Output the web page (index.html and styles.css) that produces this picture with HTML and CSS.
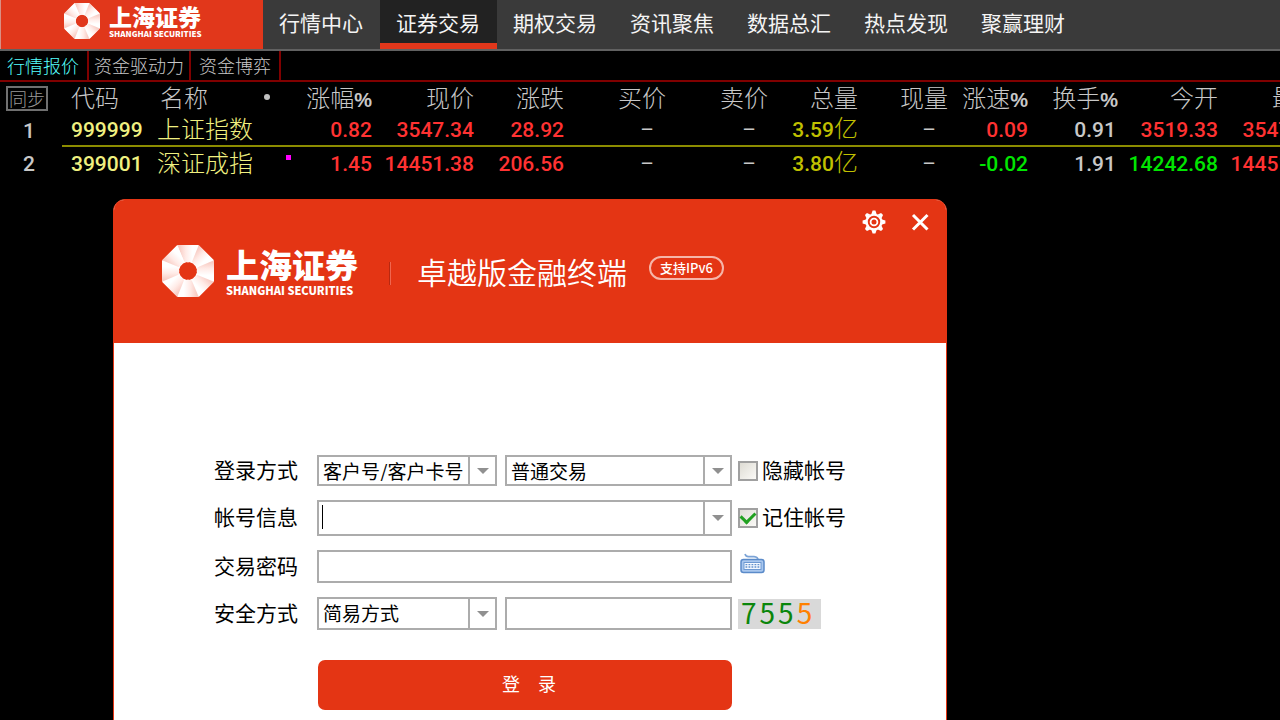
FILE: index.html
```html
<!DOCTYPE html>
<html lang="zh-CN">
<head>
<meta charset="utf-8">
<title>上海证券 卓越版金融终端</title>
<link rel="stylesheet" href="styles.css">
</head>
<body>
<svg class="defs" width="0" height="0" aria-hidden="true">
  <defs>
    <linearGradient id="facet" x1="0" y1="0" x2="1" y2="0">
      <stop offset="0.1" stop-color="#f8ccc4"/>
      <stop offset="0.4" stop-color="#ffebe7"/>
      <stop offset="0.7" stop-color="#ffffff"/>
    </linearGradient>
    <symbol id="mark" viewBox="-26 -26 52 52">
      <path d="M-10.4-25.500H10.4L25.500-10.4V10.4L10.4 25.500H-10.4L-25.500 10.4V-10.4ZM0-9.500L-6.700-6.700L-9.500 0L-6.700 6.700L0 9.500L6.700 6.700L9.500 0L6.700-6.700Z" fill="#fff" fill-rule="evenodd"/>
      <path id="wedge" d="M-10.8-26H10.8L3.8-9.600L0-8.600L-3.8-9.600Z" fill="url(#facet)"/>
      <use href="#wedge" transform="rotate(45)"/>
      <use href="#wedge" transform="rotate(90)"/>
      <use href="#wedge" transform="rotate(135)"/>
      <use href="#wedge" transform="rotate(180)"/>
      <use href="#wedge" transform="rotate(225)"/>
      <use href="#wedge" transform="rotate(270)"/>
      <use href="#wedge" transform="rotate(315)"/>
    </symbol>
  </defs>
</svg>
<div class="desktop">
  <header class="topbar">
    <div class="brand">
      <svg class="brand-mark" aria-hidden="true"><use href="#mark"/></svg>
      <div class="brand-name"><span class="brand-cn">上海证券</span><span class="brand-en">SHANGHAI SECURITIES</span></div>
    </div>
    <nav class="menu">
      <a href="#">行情中心</a>
      <a href="#" class="active">证券交易</a>
      <a href="#">期权交易</a>
      <a href="#">资讯聚焦</a>
      <a href="#">数据总汇</a>
      <a href="#">热点发现</a>
      <a href="#">聚赢理财</a>
    </nav>
  </header>
  <nav class="subtabs">
    <a href="#" class="current">行情报价</a>
    <a href="#" class="wide">资金驱动力</a>
    <a href="#">资金博弈</a>
  </nav>
  <main class="market">
    <table class="quotes">
      <colgroup>
        <col class="c-sync"><col class="c-code"><col class="c-name"><col class="c-rate"><col class="c-102"><col class="c-90"><col class="c-102"><col class="c-102"><col class="c-90"><col class="c-90"><col class="c-80"><col class="c-90"><col class="c-100"><col class="c-102">
      </colgroup>
      <thead>
        <tr>
          <th class="sync"><button type="button">同步</button></th>
          <th class="code">代码</th>
          <th class="name"><div class="name-head"><span>名称</span><i class="dot"></i></div></th>
          <th>涨幅<b>%</b></th><th>现价</th><th>涨跌</th><th>买价</th><th>卖价</th><th>总量</th><th>现量</th><th>涨速<b>%</b></th><th>换手<b>%</b></th><th>今开</th><th>最高</th>
        </tr>
      </thead>
      <tbody>
        <tr class="selected">
          <td class="index">1</td><td class="code">999999</td><td class="name">上证指数</td>
          <td class="up">0.82</td><td class="up">3547.34</td><td class="up">28.92</td><td class="none">–</td><td class="none">–</td><td class="volume">3.59<span>亿</span></td><td class="none">–</td><td class="up">0.09</td><td class="turn">0.91</td><td class="up">3519.33</td><td class="up">3547.34</td>
        </tr>
        <tr>
          <td class="index">2</td><td class="code">399001</td><td class="name"><div class="name-cell"><span>深证成指</span><i class="flag"></i></div></td>
          <td class="up">1.45</td><td class="up">14451.38</td><td class="up">206.56</td><td class="none">–</td><td class="none">–</td><td class="volume">3.80<span>亿</span></td><td class="none">–</td><td class="down">-0.02</td><td class="turn">1.91</td><td class="down">14242.68</td><td class="up">14451.38</td>
        </tr>
      </tbody>
    </table>
  </main>

  <section class="login">
    <header class="login-head">
      <div class="tools">
        <button type="button" aria-label="设置">
          <svg width="24" height="24" viewBox="-12 -12 24 24" fill="none" stroke="#fff">
            <circle r="7.400" stroke-width="2.400"/>
            <circle r="3.400" stroke-width="1.800"/>
            <g fill="#fff" stroke="none">
              <path id="tooth" d="M-2.6-8H2.6L1.4-11.400H-1.4Z"/>
              <use href="#tooth" transform="rotate(45)"/><use href="#tooth" transform="rotate(90)"/><use href="#tooth" transform="rotate(135)"/><use href="#tooth" transform="rotate(180)"/><use href="#tooth" transform="rotate(225)"/><use href="#tooth" transform="rotate(270)"/><use href="#tooth" transform="rotate(315)"/>
            </g>
          </svg>
        </button>
        <button type="button" aria-label="关闭">
          <svg width="24" height="24" viewBox="0 0 24 24" stroke="#fff" stroke-width="3"><path d="M5 5L19.500 19.500M19.500 5L5 19.500"/></svg>
        </button>
      </div>
      <div class="title-row">
        <svg class="login-mark" aria-hidden="true"><use href="#mark"/></svg>
        <div class="brand-name large"><span class="brand-cn">上海证券</span><span class="brand-en">SHANGHAI SECURITIES</span></div>
        <i class="rule"></i>
        <h1>卓越版金融终端</h1>
        <span class="badge">支持IPv6</span>
      </div>
    </header>
    <form class="login-form">
      <div class="row">
        <label class="caption" for="mode">登录方式</label>
        <div class="fields">
          <div class="combo short"><select id="mode"><option>客户号/客户卡号</option></select><span class="arrow"></span></div>
          <div class="combo"><select id="kind" aria-label="交易类型"><option>普通交易</option></select><span class="arrow"></span></div>
        </div>
        <label class="check"><input type="checkbox"><span>隐藏帐号</span></label>
      </div>
      <div class="row tall">
        <label class="caption" for="account">帐号信息</label>
        <div class="fields">
          <div class="combo"><input id="account" type="text"><i class="caret"></i><button class="arrow" type="button" aria-label="展开帐号"></button></div>
        </div>
        <label class="check"><input type="checkbox" checked><span>记住帐号</span></label>
      </div>
      <div class="row medium">
        <label class="caption" for="password">交易密码</label>
        <div class="fields"><div class="combo"><input id="password" type="password"></div></div>
        <button class="keyboard" type="button" aria-label="软键盘">
          <svg width="28" height="24" viewBox="0 0 28 24">
            <path d="M7 2Q8 5 11 4.600H16Q20 5 20 8" fill="none" stroke="#7ba3d6" stroke-width="1.600"/>
            <rect x="3" y="7.500" width="23" height="13" rx="2.500" fill="#a9c7ee" stroke="#5b8bc9" stroke-width="1.500"/>
            <rect x="6" y="10.500" width="17" height="7" fill="#f3f8ff" stroke="#6d99d2"/>
            <path d="M7.500 12.700H22M7.500 15H22" stroke="#6290cc" stroke-width="1.300" stroke-dasharray="1.800 1.200"/>
          </svg>
        </button>
      </div>
      <div class="row medium">
        <label class="caption" for="safe">安全方式</label>
        <div class="fields">
          <div class="combo short"><select id="safe"><option>简易方式</option></select><span class="arrow"></span></div>
          <div class="combo"><input type="text" aria-label="验证码"></div>
        </div>
        <div class="captcha"><span>7</span><span>5</span><span>5</span><span class="orange">5</span></div>
      </div>
      <button class="submit" type="submit">登　录</button>
    </form>
  </section>
</div>
</body>
</html>
```
FILE: styles.css
```css
* { box-sizing: border-box; }
body {
  margin: 0;
  background: #000;
  font-family: "Noto Sans CJK SC", "Noto Sans", sans-serif;
}
a { text-decoration: none; }
button { padding: 0; border: 0; background: none; font-family: inherit; }
.defs { position: absolute; }
.desktop { position: relative; height: 100vh; overflow: hidden; }

/* main navigation */
.topbar {
  display: flex;
  height: 51px;
  background: #3a3a3a;
  border-bottom: 2px solid #616161;
}
.brand {
  display: flex;
  align-items: center;
  gap: 9px;
  width: 263px;
  padding: 0 0 7px 63px;
  background: #e1371b;
  border-left: 1px solid #d98f84;
}
.brand-mark { width: 36px; height: 36px; }
.brand-name { display: flex; flex-direction: column; color: #fff; white-space: nowrap; }
.brand-cn { font-size: 23px; line-height: 26px; font-weight: 900; }
.brand-en { font-size: 8px; line-height: 10px; font-weight: 900; }
.menu { display: flex; }
.menu a {
  width: 117px;
  padding-right: 1px;
  color: #f4f4f4;
  font-size: 21px;
  line-height: 44px;
  text-align: center;
}
.menu .active { background: #222; border-bottom: 6px solid #e1371b; }

/* quote tabs */
.subtabs { display: flex; height: 31px; border-bottom: 2px solid #800000; }
.subtabs a {
  padding: 0 8px;
  border-right: 2px solid #800000;
  color: #c8c8c8;
  font-size: 18px;
  font-weight: 300;
  line-height: 28px;
}
.subtabs .wide { padding: 0 5px; }
.subtabs .current { padding-left: 7px; color: #5ff; }

/* quote table */
.quotes {
  width: 1320px;
  table-layout: fixed;
  border-collapse: collapse;
  color: #c8c8c8;
  white-space: nowrap;
}
.c-sync { width: 62px; }
.c-code { width: 90px; }
.c-name { width: 140px; }
.c-rate { width: 80px; }
.c-80 { width: 80px; }
.c-90 { width: 90px; }
.c-100 { width: 100px; }
.c-102 { width: 102px; }
.quotes th {
  height: 31px;
  padding: 0;
  font-size: 24px;
  font-weight: 300;
  line-height: 29px;
  text-align: right;
  vertical-align: top;
}
.quotes th b { font-family: "Liberation Sans", sans-serif; font-size: 20px; font-weight: 700; line-height: 20px; }
.quotes td {
  height: 32px;
  padding: 2px 0 0;
  font-family: Roboto, "Noto Sans CJK SC", sans-serif;
  font-size: 21px;
  font-weight: 500;
  line-height: 30px;
  text-align: right;
}
.quotes .selected td + td { border-bottom: 2px solid #8c8c00; }
.quotes .sync { padding: 4px 0 0 6px; text-align: left; }
.sync button {
  display: block;
  width: 42px;
  height: 25px;
  border: 2px solid #707070;
  color: #989898;
  font-size: 18px;
  font-weight: 300;
  line-height: 19px;
}
.quotes .index { padding-right: 4px; text-align: center; }
.quotes .code { padding-left: 9px; text-align: left; }
.quotes td.code { color: #f0f080; }
.quotes th.name { padding-left: 8px; }
.quotes td.name {
  padding-left: 5px;
  color: #f0f080;
  font-size: 24px;
  font-weight: 300;
  text-align: left;
}
.name-head, .name-cell { display: flex; align-items: center; }
.name-head { gap: 56px; }
.name-cell { gap: 33px; }
.dot { width: 6px; height: 6px; border-radius: 50%; background: #c0c0c0; }
.flag { width: 5px; height: 5px; margin-bottom: 14px; background: #f0f; }
.quotes .up { color: #ff3232; }
.quotes .down { color: #00e600; }
.quotes .volume { color: #c0c000; }
.volume span { font-size: 24px; font-weight: 300; line-height: 24px; }
.quotes .none { padding-right: 12px; font-weight: 400; }
.quotes .turn { padding-right: 2px; }

/* login window */
.login {
  position: absolute;
  top: 199px;
  left: 113px;
  width: 834px;
  min-height: 560px;
  border: 1px solid #e43514;
  border-radius: 12px;
  background: #fff;
}
.login-head {
  height: 143px;
  padding-top: 10px;
  border-radius: 10px 10px 0 0;
  background: #e43514;
}
.tools { display: flex; justify-content: flex-end; gap: 22px; padding-right: 14px; }
.tools svg { display: block; }
.title-row {
  display: flex;
  align-items: center;
  padding: 11px 0 0 48px;
  color: #fff;
}
.login-mark { width: 52px; height: 52px; margin-right: 12px; }
.large { width: 132px; }
.large .brand-cn { font-size: 33px; line-height: 38px; }
.large .brand-en { font-size: 11px; line-height: 14px; }
.rule { width: 2px; height: 23px; margin: 4px 26px 0 31px; background: #f0664f; border-left: 1px solid #b82810; }
.login h1 { margin: 0; font-size: 30px; line-height: 36px; font-weight: 350; }
.badge {
  margin: 0 0 6px 22px;
  padding: 0 9px;
  border: 2px solid #f6b5a8;
  border-radius: 12px;
  font-size: 13px;
  font-weight: 500;
  line-height: 20px;
}
.login-form {
  display: flex;
  flex-direction: column;
  gap: 14px;
  padding: 112px 90px 0 100px;
}
.row { display: flex; align-items: center; height: 31px; }
.tall { height: 36px; }
.medium { height: 33px; }
.caption { width: 103px; padding-bottom: 4px; font-size: 21px; line-height: 30px; font-weight: 400; }
.fields { display: flex; gap: 8px; width: 415px; height: 100%; margin-right: 6px; }
.combo {
  position: relative;
  display: flex;
  flex: 1;
  border: 2px solid #acacac;
  background: #fff;
}
.short { flex: 0 0 180px; }
.combo select, .combo input {
  flex: 1;
  min-width: 0;
  padding: 0 0 3px 4px;
  border: 0;
  outline: 0;
  background: #fff;
  color: #000;
  font-family: inherit;
  font-size: 19px;
  appearance: none;
}
.arrow {
  display: flex;
  flex: 0 0 27px;
  align-items: center;
  justify-content: center;
  border-left: 2px solid #acacac;
}
.arrow::after {
  content: "";
  border: 6px solid transparent;
  border-top-color: #909090;
  border-bottom: 0;
}
.caret { position: absolute; left: 3px; top: 3px; width: 1px; height: 24px; background: #000; }
.check { display: flex; align-items: center; gap: 4px; font-size: 21px; line-height: 30px; white-space: nowrap; }
.check span { padding-bottom: 4px; }
.check input {
  display: grid;
  place-items: center;
  width: 20px;
  height: 20px;
  margin: 0;
  border: 2px solid #a0a0a0;
  background: linear-gradient(135deg, #dedcd4, #fbfaf7);
  appearance: none;
}
.check input:checked::after {
  content: "";
  width: 11px;
  height: 7px;
  margin-bottom: 4px;
  border-left: 3px solid #21a121;
  border-bottom: 3px solid #21a121;
  transform: rotate(-45deg);
}
.keyboard { padding-bottom: 6px; }
.keyboard svg { display: block; }
.captcha {
  display: flex;
  gap: 3px;
  width: 83px;
  height: 30px;
  padding-left: 3px;
  background: #d9d9d9;
  color: #0b860b;
  font-size: 28px;
  line-height: 27px;
  font-weight: 400;
}
.orange { color: #ff8000; }
.submit {
  width: 414px;
  height: 50px;
  margin: 16px 0 0 104px;
  padding: 0 0 4px 8px;
  border-radius: 7px;
  background: #e43514;
  color: #fff;
  font-size: 18px;
}
```
